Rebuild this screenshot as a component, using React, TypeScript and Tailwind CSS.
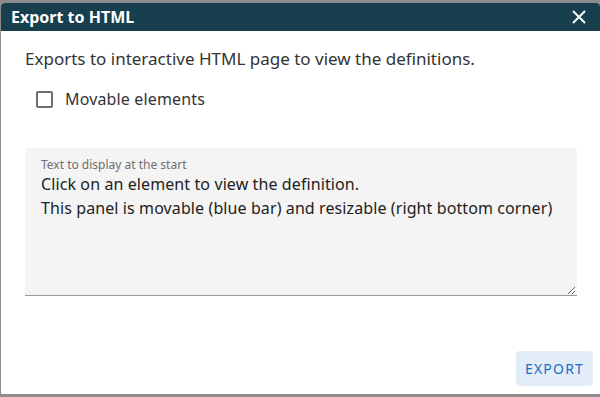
import React, { useState } from 'react';

export default function App() {
  const [movable, setMovable] = useState(false);
  const [text, setText] = useState(
    'Click on an element to view the definition.\nThis panel is movable (blue bar) and resizable (right bottom corner)'
  );
  return (
    <div
      className="w-[600px] h-[397px] bg-[#8c8c8c] pt-[3px] pl-[1px] pb-[3px] overflow-hidden"
      style={{ fontFamily: '"Noto Sans", "Open Sans", sans-serif' }}>
      <div className="w-[599px] h-[391px] bg-white rounded-t-[4px] flex flex-col">
        <div className="h-[28px] bg-[#173f4e] rounded-t-[4px] flex items-center justify-between pl-[10px] pr-[14px]">
          <span className="text-white font-bold text-[16px] leading-none">Export to HTML</span>
          <button className="text-white">
            <svg width="14" height="14" viewBox="0 0 14 14" stroke="white" strokeWidth="2">
              <path d="M1 1 L13 13 M13 1 L1 13" />
            </svg>
          </button>
        </div>

        <div className="flex-1 flex flex-col px-[24px] pt-[17px]">
          <p className="text-[17px] text-[#333] leading-[22px]">
            Exports to interactive HTML page to view the definitions.
          </p>

          <label className="flex items-center mt-[18px] ml-[11px] gap-[12px] cursor-pointer">
            <input
              type="checkbox"
              checked={movable}
              onChange={(e) => setMovable(e.target.checked)}
              className="appearance-none w-[17px] h-[17px] border-2 border-[#707070] rounded-[2px] checked:bg-[#2a6ebb]" />
            <span className="text-[16px] text-[#333] leading-[22px] tracking-[0.15px]">Movable elements</span>
          </label>

          <div className="mt-[38px] w-[552px] h-[148px] bg-[#f4f4f4] rounded-t-[4px] border-b border-[#9a9a9a] pt-[9px] pl-[16px] flex flex-col">
            <span className="text-[12px] text-[#6f6f6f] leading-[16px]">Text to display at the start</span>
            <textarea
              value={text}
              onChange={(e) => setText(e.target.value)}
              className="flex-1 -mt-[1px] bg-transparent outline-none text-[16px] text-[#222] leading-[24px] tracking-[0.1px] resize-y mr-[1px]" />
          </div>

          <div className="flex-1"></div>
          <div className="flex justify-end -mr-[17px] mb-[8px]">
            <button className="bg-[#e3edf8] text-[#1f6cc4] rounded-[4px] h-[35px] w-[77px] text-[14px] tracking-[1.2px]">
              EXPORT
            </button>
          </div>
        </div>
      </div>
    </div>);

}
